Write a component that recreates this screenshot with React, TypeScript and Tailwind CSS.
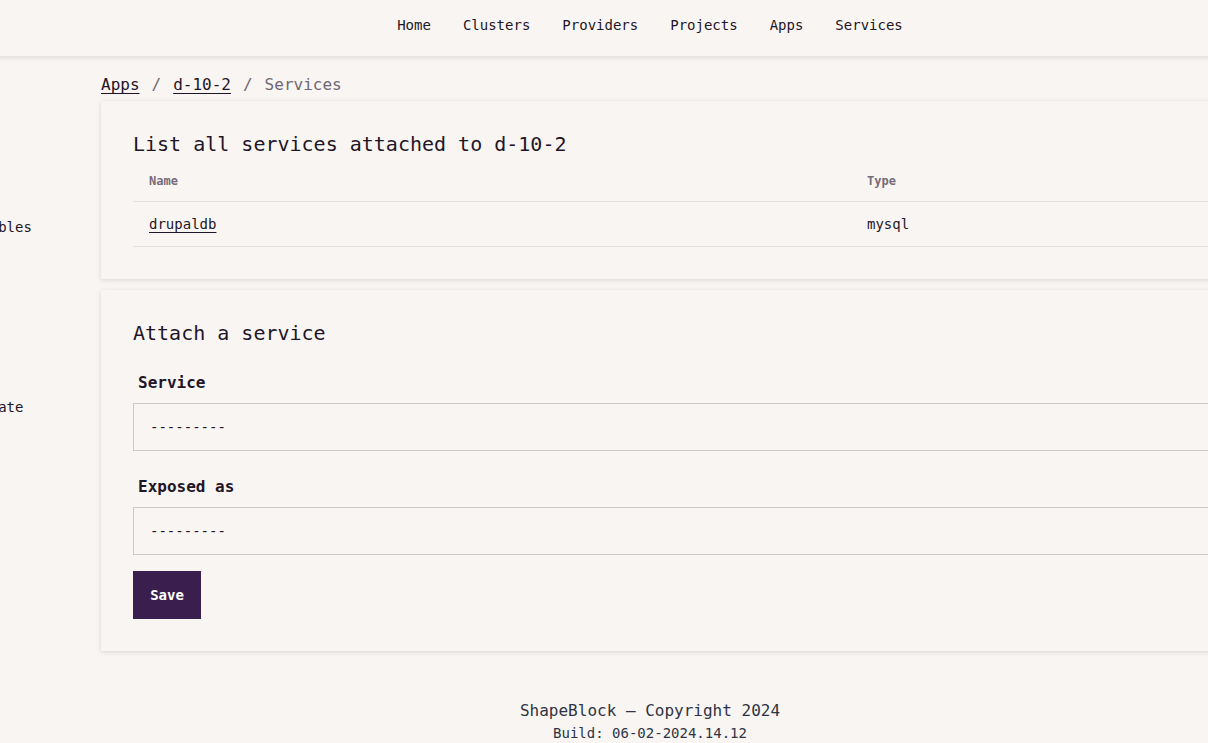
import React from "react";

const mono = { fontFamily: '"DejaVu Sans Mono", "Liberation Mono", monospace' };

export default function App() {
  const nav = ["Home", "Clusters", "Providers", "Projects", "Apps", "Services"];
  return (
    <div className="w-[1208px] h-[743px] overflow-hidden bg-[#f9f5f2] text-[#1f1628]" style={mono}>
      <div className="w-[1420px] -ml-[60px]">
        <header className="h-[56px] bg-[#f9f5f2] shadow-[0_2px_5px_rgba(0,0,0,0.1)] flex justify-center pt-[15px] relative z-10">
          <nav className="flex gap-[32px] text-[14px] leading-[20px] h-[20px]">
            {nav.map((n) => (
              <span key={n}>{n}</span>
            ))}
          </nav>
        </header>
        <div className="flex">
          <aside className="w-[161px] shrink-0 pl-4 text-[14px] leading-[20px]">
            <div className="mt-[161px]">Variables</div>
            <div className="mt-[160px]">Activate</div>
          </aside>
          <main className="flex-1 pr-[100px]">
            <div className="mt-[17px] text-[16px] leading-[24px] h-[24px] flex">
              <span className="underline underline-offset-[3px]">Apps</span>
              <span className="text-[#6e6872] mx-[12px]">/</span>
              <span className="underline underline-offset-[3px]">d-10-2</span>
              <span className="text-[#6e6872] mx-[12px]">/</span>
              <span className="text-[#6e6872]">Services</span>
            </div>
            <section className="mt-[4px] bg-[#f9f5f2] shadow-[0_1px_5px_rgba(0,0,0,0.13)] px-8 pt-8 pb-8">
              <h2 className="text-[20px] leading-[22px] mb-[6px]">List all services attached to d-10-2</h2>
              <div className="flex h-[41px] items-center border-b border-[#e6e1de] text-[12px] font-bold text-[#766c7b]">
                <div className="w-[718px] pl-4">Name</div>
                <div className="pl-4">Type</div>
              </div>
              <div className="flex h-[45px] items-center border-b border-[#e6e1de] text-[14px]">
                <div className="w-[718px] pl-4">
                  <span className="underline underline-offset-[3px]">drupaldb</span>
                </div>
                <div className="pl-4">mysql</div>
              </div>
            </section>
            <section className="mt-[11px] bg-[#f9f5f2] shadow-[0_1px_5px_rgba(0,0,0,0.13)] px-8 pt-8 pb-8">
              <h2 className="text-[20px] leading-[22px] mb-[27px]">Attach a service</h2>
              <label className="block pl-[5px] text-[16px] leading-[24px] font-bold mb-[8px]">Service</label>
              <div className="h-[48px] border border-[#cfc9c6] flex items-center pl-4 text-[14px]">---------</div>
              <label className="block pl-[5px] text-[16px] leading-[24px] font-bold mt-[24px] mb-[8px]">Exposed as</label>
              <div className="h-[48px] border border-[#cfc9c6] flex items-center pl-4 text-[14px]">---------</div>
              <button className="mt-[16px] h-[48px] w-[68px] bg-[#3a1f4e] text-white text-[14px] font-bold flex items-center justify-center">
                Save
              </button>
            </section>
          </main>
        </div>
        <footer className="mt-[48px] flex flex-col items-center text-[#2e3445]">
          <div className="text-[16px] leading-[24px]">ShapeBlock — Copyright 2024</div>
          <div className="text-[14px] leading-[20px]">Build: 06-02-2024.14.12</div>
        </footer>
      </div>
    </div>
  );
}
